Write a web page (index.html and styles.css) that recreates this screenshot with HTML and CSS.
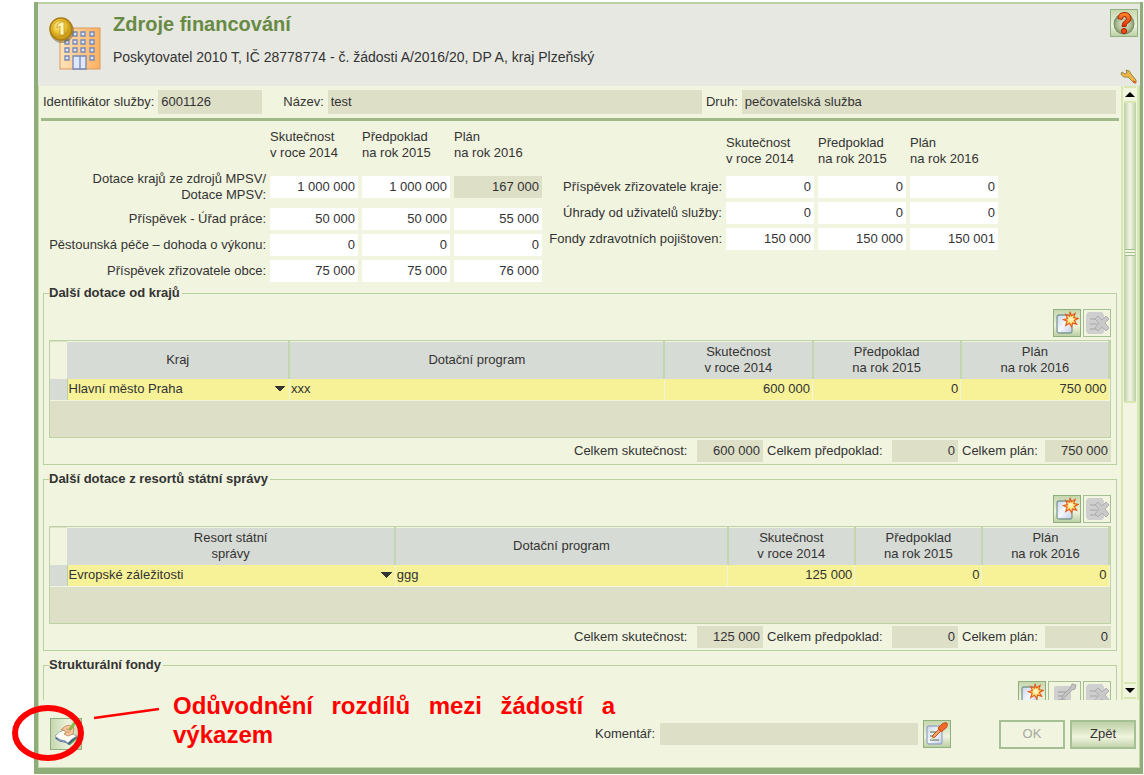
FILE: index.html
```html
<!DOCTYPE html>
<html lang="cs">
<head>
<meta charset="utf-8">
<title>Zdroje financování</title>
<link rel="stylesheet" href="styles.css">
</head>
<body>
<svg class="defs" width="0" height="0" aria-hidden="true">
  <defs>
    <linearGradient id="page" x1="0" y1="0" x2="1" y2="1"><stop offset="0" stop-color="#c9d3ea"/><stop offset=".5" stop-color="#f4f7fd"/><stop offset="1" stop-color="#c3cce4"/></linearGradient>
    <radialGradient id="star"><stop offset="0" stop-color="#fffbe0"/><stop offset=".6" stop-color="#ffdc5c"/><stop offset="1" stop-color="#f8a23a"/></radialGradient>
    <linearGradient id="wall" x1="0" x2="1"><stop offset="0" stop-color="#ffe3b8"/><stop offset="1" stop-color="#fcb061"/></linearGradient>
    <radialGradient id="coin" cx=".4" cy=".35"><stop offset="0" stop-color="#fff09a"/><stop offset=".6" stop-color="#edc534"/><stop offset="1" stop-color="#c99a18"/></radialGradient>
    <linearGradient id="fire" x1="0" y1="0" x2="0" y2="1"><stop offset="0" stop-color="#ff8a2c"/><stop offset="1" stop-color="#e0300a"/></linearGradient>
    <radialGradient id="disc"><stop offset="0" stop-color="#e3ead2"/><stop offset=".7" stop-color="#a9bc92"/><stop offset="1" stop-color="#738a64"/></radialGradient>
  </defs>
  <symbol id="i-new" viewBox="0 0 24 24">
    <rect x="2" y="4" width="15" height="18" rx="2" fill="url(#page)" stroke="#7d9a90" stroke-width="1.3"/>
    <path d="M15 .8l1.500 4 3.600-2.300-1.300 4.100 4.400.8-3.900 2.100 2.300 3.700-4.100-1.100-.9 3.700-2.100-3.500-3.700 2.100 1.300-4.200-3.600-1.500 3.900-1.200-1.700-4 3.900 1.700z" fill="url(#star)" stroke="#e2601f" stroke-width="1.2"/>
  </symbol>
  <symbol id="i-del" viewBox="0 0 24 24">
    <path d="M3 1h14l2 3v17l-2 2H3l-2-3V4z" fill="#cfcfcf"/>
    <path d="M5 8h8M5 13h7M5 18h8" stroke="#b4b4b4" stroke-width="1.5"/>
    <path d="M10 8l3-3 4 4 4-4 3 3-4 4 4 5-3 3-4-4-4 4-3-3 4-5z" fill="#c9c9c9" stroke="#aeaeae"/>
  </symbol>
  <symbol id="i-edit-off" viewBox="0 0 24 24">
    <rect x="1" y="3" width="17" height="20" rx="2" fill="#cfcfcf"/>
    <path d="M5 9h8M5 13h6M5 17h8" stroke="#aaa" stroke-width="1.5"/>
    <path d="M8 17l2-5 7-7 2-4 4 1-1 4-3 1-8 8z" fill="#c2c2c2" stroke="#a8a8a8"/>
  </symbol>
  <symbol id="i-edit" viewBox="0 0 24 24">
    <rect x="2" y="4" width="15" height="18" rx="2" fill="url(#page)" stroke="#9aa9c4" stroke-width="1.3"/>
    <path d="M5 10h8M5 14h5M5 18h9" stroke="#7d9a83" stroke-width="1.5"/>
    <path d="M7 17l1-4 6-6 2 2-6 6z" fill="#f5a266" stroke="#b8470f" stroke-width=".9"/>
    <path d="M13 6l4-4q3-2 5-1 1 3-1 5l-5 4z" fill="#f26a28" stroke="#c2450f" stroke-width=".9"/>
    <path d="M6 18l1-3 2 2z" fill="#f8e1b5"/>
  </symbol>
  <symbol id="i-book" viewBox="0 0 28 28">
    <path d="M3 18l10-7 13 6-9 8q-3-3-7-3-3 0-7-4z" fill="#3b568a"/>
    <path d="M3 16q4-5 9-6l13 6q-6 3-9 7-3-3-7-3-3-1-6-4z" fill="#fbfcf4" stroke="#8a9a9a" stroke-width=".8"/>
    <path d="M4 19q3 2 6 2 4 1 6 3" fill="none" stroke="#8aa2c4" stroke-width="1"/>
    <path d="M9 10q3-4 8-5l5 3-1 6-5 2-4-2 2-1-2-3z" fill="#f4c79d" stroke="#c08350" stroke-width=".8"/>
    <path d="M14 9l5 1M14 12l4 0" stroke="#c08350" stroke-width=".8"/>
    <path d="M17 9L22 2l2 1-5 7z" fill="#8abf3d" stroke="#6a9a35" stroke-width=".5"/>
    <path d="M17 25l9-8" stroke="#5a9a4a" stroke-width="1.5"/>
  </symbol>
</svg>

<div class="window">
  <header class="head">
    <svg class="logo" viewBox="0 0 54 54" width="54" height="54" aria-hidden="true">
      <rect x="11" y="11" width="40" height="41" fill="url(#wall)" stroke="#d99858" stroke-width="1"/>
      <g fill="#dfe8fb" stroke="#7486b5" stroke-width="1.3">
        <path d="M24 15h4v4h-4zM32 15h4v4h-4zM41 15h4v4h-4zM16 23h4v4h-4zM24 23h4v4h-4zM32 23h4v4h-4zM41 23h4v4h-4zM16 31h4v4h-4zM24 31h4v4h-4zM32 31h4v4h-4zM41 31h4v4h-4zM16 39h4v4h-4zM41 39h4v4h-4z"/>
        <path d="M24 39h13v13h-13z"/><path d="M31 39v13"/>
      </g>
      <circle cx="13" cy="14" r="12" fill="#5d5020" opacity=".45"/>
      <circle cx="12" cy="12" r="11" fill="url(#coin)" stroke="#a87d14" stroke-width="1.5"/>
      <circle cx="12" cy="12" r="8.5" fill="none" stroke="#d3a622"/>
      <path d="M8 8l4-3h3v13h-4V9l-3 2z" fill="#fff6b4" stroke="#c39a24" stroke-width=".8"/>
    </svg>
    <div class="titles">
      <h1>Zdroje financování</h1>
      <p>Poskytovatel 2010 T, IČ 28778774 - č. žádosti A/2016/20, DP A, kraj Plzeňský</p>
    </div>
    <div class="tools">
      <button class="icon-btn" type="button" aria-label="Nápověda">
        <svg width="24" height="24" viewBox="0 0 24 24"><circle cx="12" cy="13" r="10.5" fill="url(#disc)"/><path d="M6 7.500Q6 2 12 1.500q7 0 7 6 0 3-3.500 5-1.500 1-1.500 3h-4q0-4 2.500-5.500 2-1 2-2.500 0-2-2-2t-2.500 3z" fill="url(#fire)" stroke="#a82406"/><circle cx="12" cy="20" r="2.6" fill="#f04a12" stroke="#a82406"/></svg>
      </button>
      <svg class="wrench" width="18" height="18" viewBox="0 0 18 18" aria-hidden="true"><path d="M2 4l3 2 2-1-1-3q4 0 5 4l5 6q1 3-2 3L8 9Q3 10 1 6z" fill="#f2b545" stroke="#8d8a4a" stroke-width="1"/><path d="M13 13l3 2" stroke="#d8661d" stroke-width="2"/></svg>
    </div>
  </header>

  <div class="middle">
    <main class="content">
      <div class="ident">
        <label for="f-id">Identifikátor služby:</label><input id="f-id" class="f-id" value="6001126" readonly>
        <label for="f-name">Název:</label><input id="f-name" class="f-name" value="test" readonly>
        <label for="f-kind">Druh:</label><input id="f-kind" class="f-kind" value="pečovatelská služba" readonly>
      </div>

      <div class="forms">
        <div class="grid left">
          <span></span><span class="col">Skutečnost<br>v roce 2014</span><span class="col">Předpoklad<br>na rok 2015</span><span class="col">Plán<br>na rok 2016</span>
          <label for="a1">Dotace krajů ze zdrojů MPSV/<br>Dotace MPSV:</label><input id="a1" value="1 000 000"><input aria-label="Dotace MPSV 2015" value="1 000 000"><input aria-label="Dotace MPSV 2016" value="167 000" readonly>
          <label for="a2">Příspěvek - Úřad práce:</label><input id="a2" value="50 000"><input aria-label="Úřad práce 2015" value="50 000"><input aria-label="Úřad práce 2016" value="55 000">
          <label for="a3">Pěstounská péče – dohoda o výkonu:</label><input id="a3" value="0"><input aria-label="Pěstounská péče 2015" value="0"><input aria-label="Pěstounská péče 2016" value="0">
          <label for="a4">Příspěvek zřizovatele obce:</label><input id="a4" value="75 000"><input aria-label="Obec 2015" value="75 000"><input aria-label="Obec 2016" value="76 000">
        </div>
        <div class="grid right">
          <span></span><span class="col">Skutečnost<br>v roce 2014</span><span class="col">Předpoklad<br>na rok 2015</span><span class="col">Plán<br>na rok 2016</span>
          <label for="b1">Příspěvek zřizovatele kraje:</label><input id="b1" value="0"><input aria-label="Kraj 2015" value="0"><input aria-label="Kraj 2016" value="0">
          <label for="b2">Úhrady od uživatelů služby:</label><input id="b2" value="0"><input aria-label="Úhrady 2015" value="0"><input aria-label="Úhrady 2016" value="0">
          <label for="b3">Fondy zdravotních pojištoven:</label><input id="b3" value="150 000"><input aria-label="Fondy 2015" value="150 000"><input aria-label="Fondy 2016" value="150 001">
        </div>
      </div>

      <fieldset class="group">
        <legend>Další dotace od krajů</legend>
        <div class="bar">
          <button class="icon-btn" type="button" aria-label="Nový"><svg width="24" height="24"><use href="#i-new"/></svg></button>
          <button class="icon-btn" type="button" aria-label="Smazat" disabled><svg width="24" height="24"><use href="#i-del"/></svg></button>
        </div>
        <div class="table-box">
          <table>
            <colgroup><col class="c-mark"><col class="c-region"><col><col class="c-sum"><col class="c-sum"><col class="c-sum"></colgroup>
            <thead><tr><td></td><th>Kraj</th><th>Dotační program</th><th>Skutečnost<br>v roce 2014</th><th>Předpoklad<br>na rok 2015</th><th>Plán<br>na rok 2016</th></tr></thead>
            <tbody><tr><td class="mark"></td><td><select aria-label="Kraj"><option>Hlavní město Praha</option></select></td><td>xxx</td><td class="num">600 000</td><td class="num">0</td><td class="num">750 000</td></tr></tbody>
          </table>
        </div>
        <div class="totals">
          <label for="t1">Celkem skutečnost:</label><input id="t1" value="600 000" readonly>
          <label for="t2">Celkem předpoklad:</label><input id="t2" value="0" readonly>
          <label for="t3">Celkem plán:</label><input id="t3" value="750 000" readonly>
        </div>
      </fieldset>

      <fieldset class="group">
        <legend>Další dotace z resortů státní správy</legend>
        <div class="bar">
          <button class="icon-btn" type="button" aria-label="Nový"><svg width="24" height="24"><use href="#i-new"/></svg></button>
          <button class="icon-btn" type="button" aria-label="Smazat" disabled><svg width="24" height="24"><use href="#i-del"/></svg></button>
        </div>
        <div class="table-box">
          <table>
            <colgroup><col class="c-mark"><col class="c-resort"><col><col class="c-part"><col class="c-part"><col class="c-part"></colgroup>
            <thead><tr><td></td><th>Resort státní<br>správy</th><th>Dotační program</th><th>Skutečnost<br>v roce 2014</th><th>Předpoklad<br>na rok 2015</th><th>Plán<br>na rok 2016</th></tr></thead>
            <tbody><tr><td class="mark"></td><td><select aria-label="Resort státní správy"><option>Evropské záležitosti</option></select></td><td>ggg</td><td class="num">125 000</td><td class="num">0</td><td class="num">0</td></tr></tbody>
          </table>
        </div>
        <div class="totals">
          <label for="t4">Celkem skutečnost:</label><input id="t4" value="125 000" readonly>
          <label for="t5">Celkem předpoklad:</label><input id="t5" value="0" readonly>
          <label for="t6">Celkem plán:</label><input id="t6" value="0" readonly>
        </div>
      </fieldset>

      <fieldset class="group">
        <legend>Strukturální fondy</legend>
        <div class="bar">
          <button class="icon-btn" type="button" aria-label="Nový"><svg width="24" height="24"><use href="#i-new"/></svg></button>
          <button class="icon-btn wide" type="button" aria-label="Upravit" disabled><svg width="24" height="24"><use href="#i-edit-off"/></svg></button>
          <button class="icon-btn" type="button" aria-label="Smazat" disabled><svg width="24" height="24"><use href="#i-del"/></svg></button>
        </div>
      </fieldset>
    </main>
    <div class="scroll" aria-hidden="true">
      <span class="arrow"><svg width="10" height="5" viewBox="0 0 10 5"><path d="M5 0l5 5H0z"/></svg></span>
      <span class="thumb"><i></i></span>
      <span class="track"></span>
      <span class="arrow"><svg width="10" height="5" viewBox="0 0 10 5"><path d="M5 5l5-5H0z"/></svg></span>
    </div>
  </div>

  <footer class="foot">
    <button class="icon-btn big" type="button" aria-label="Odůvodnění rozdílů"><svg width="28" height="28"><use href="#i-book"/></svg></button>
    <label class="c-label" for="comment">Komentář:</label><input id="comment" class="comment" readonly>
    <button class="icon-btn" type="button" aria-label="Upravit komentář"><svg width="24" height="24"><use href="#i-edit"/></svg></button>
    <button class="btn ok" type="button" disabled>OK</button>
    <button class="btn" type="button">Zpět</button>
  </footer>
</div>

<svg class="callout" width="170" height="75" viewBox="0 0 170 75" aria-hidden="true">
  <ellipse cx="48" cy="33" rx="33" ry="25" fill="none" stroke="#f00" stroke-width="6"/>
  <path d="M94 18l65-9" stroke="#f00" stroke-width="2.5"/>
</svg>
<p class="note"><span class="full">Odůvodnění rozdílů mezi žádostí a</span> <span class="rest">výkazem</span></p>
</body>
</html>
```
FILE: styles.css
```css
* { box-sizing: border-box; }
body {
  margin: 0;
  padding: 2px 1px 1px 34px;
  height: 100vh;
  position: relative;
  overflow: hidden;
  background: #fff;
  color: #333;
  font: 13px/16px "Liberation Sans", Arial, sans-serif;
}
.defs { position: absolute; }
input, select, button { font: inherit; color: inherit; margin: 0; border: 0; border-radius: 0; }
input { background: #fff; height: 22px; padding: 0 3px 2px; min-width: 0; }
input[readonly] { background: #dddfc7; }

.window {
  height: 100%;
  display: flex;
  flex-direction: column;
  background: #f1f4df;
  border: solid #8fad78;
  border-width: 0 3px 6px 4px;
  box-shadow: inset 1px 0 #c5d8ab, inset -1px 0 #c5d8ab, inset 0 -1px #c5d8ab;
}
.head {
  display: flex;
  height: 84px;
  flex: none;
  background: #e7e8e2;
  border-top: 2px solid #bccfa3;
  padding: 5px 2px 0 11px;
}
.logo { margin-top: 8px; }
.titles { flex: 1; padding: 4px 0 0 10px; }
h1 { margin: 0; font-size: 20px; line-height: 22px; color: #688a44; }
.titles p { margin: 13px 0 0; font-size: 14px; line-height: 18px; }
.tools { width: 28px; display: flex; flex-direction: column; align-items: flex-end; justify-content: space-between; }
.icon-btn {
  width: 28px;
  height: 28px;
  flex: none;
  padding: 0;
  display: grid;
  place-items: center;
  border: 1px solid #8fb07c;
  background: linear-gradient(#c6d7ae, #eef3df 60%, #bdd0a4);
}
.icon-btn:disabled { background: #f1f4df; border-color: #a5c093; }
.icon-btn.wide { width: 33px; }
.icon-btn.big { width: 32px; height: 32px; background: linear-gradient(90deg, #c6d7ae, #eef3df 60%, #bdd0a4); }

.middle { flex: 1; min-height: 0; display: flex; }
.content { flex: 1; min-width: 0; overflow: hidden; padding: 4px 2px 0 3px; }
.ident { display: flex; align-items: center; gap: 4px; padding: 0 3px 4px 2px; border-bottom: 3px solid #9fba88; }
.ident input { height: 24px; padding-bottom: 1px; }
.f-id { width: 104px; margin-right: 17px; }
.f-name { flex: 1; }
.f-kind { flex: 1; }

.forms { display: flex; padding: 8px 0 0 2px; }
.grid { display: grid; gap: 4px; align-items: center; }
.grid.left { grid-template-columns: 223px repeat(3, 88px); grid-template-rows: 37px 34px; }
.grid.right { grid-template-columns: 178px repeat(3, 88px); grid-template-rows: 37px; align-content: start; padding: 6px 0 0 2px; }
.grid label { text-align: right; white-space: nowrap; }
.grid input { text-align: right; }
.col { align-self: start; }

.group {
  margin: 3px 2px 6px;
  min-width: 0;
  padding: 0 5px 2px;
  border: 1px solid #b9d09f;
}
legend { padding: 0 2px 0 0; font-weight: bold; line-height: 16px; }
.bar { display: flex; justify-content: flex-end; gap: 2px; margin: 8px 0 3px; }
.table-box { height: 98px; background: #dddfc7; border: 1px solid #bdd3a5; }
table { width: 100%; table-layout: fixed; border-collapse: collapse; }
.c-mark { width: 17px; }
.c-region { width: 21%; }
.c-resort { width: 31%; }
.c-sum { width: 14%; }
.c-part { width: 12%; }
th { height: 37px; padding: 0; font-weight: normal; background: #d7dbd5; border-right: 2px solid #c3d6b0; border-top: 1px solid #f1f4df; }
thead td { background: #f1f4df; }
tbody td { height: 22px; padding: 0 2px 1px 1px; background: #f7f298; border-right: 1px solid #f1f4df; border-bottom: 1px solid #f1f4df; }
tbody .mark { background: #d7dbd5; border-right-color: #b9d09f; }
.num { text-align: right; }
select {
  display: block;
  width: 100%;
  height: 20px;
  padding: 0;
  appearance: none;
  background: linear-gradient(to bottom right, #333 50%, transparent 50%) no-repeat right 1px center / 6px 6px, linear-gradient(to bottom left, #333 50%, transparent 50%) no-repeat right 7px center / 6px 6px;
}
.totals { display: grid; grid-template-columns: 119px 66px 121px 66px 79px 66px; justify-content: end; align-items: center; gap: 4px; margin-top: 2px; }
.totals input { text-align: right; }

.scroll { width: 18px; flex: none; display: flex; flex-direction: column; padding: 0 1px 1px; margin-right: 1px; border: solid #d9e8b2; border-width: 0 2px; }
.arrow { height: 17px; display: grid; place-items: center; border: solid #d9e8b2; border-width: 2px 0; }
.thumb { flex: 300; display: grid; place-items: center; background: linear-gradient(90deg, #bdd0a4, #f4f6e8 50%, #bdd0a4); }
.thumb i { width: 10px; height: 7px; border: solid #a4bf92; border-width: 1px 0; background: linear-gradient(#f1f4df 2px, #a4bf92 2px, #a4bf92 3px, #f1f4df 3px); }
.track { flex: 280; background: #f3f4e2; border-top: 2px solid #d9e8b2; }

.foot { flex: none; height: 68px; display: flex; align-items: center; gap: 5px; padding: 0 4px 0 12px; }
.c-label { margin-left: auto; }
.comment { width: 258px; }
.btn { width: 66px; height: 29px; border: 2px solid #a5c093; background: linear-gradient(#bdd0a4, #f1f4df 60%, #c3d4ac); }
.btn:disabled { background: #f1f4df; color: #a6a8a0; }
.ok { margin-left: 43px; }

.callout { position: absolute; left: 0; top: 700px; pointer-events: none; }
.note {
  position: absolute;
  left: 173px;
  top: 691px;
  width: 442px;
  margin: 0;
  color: #f00;
  font-size: 24px;
  line-height: 29px;
  font-weight: bold;
  pointer-events: none;
}
.full { display: block; text-align: justify; text-align-last: justify; }
.rest { display: block; width: fit-content; }
```
